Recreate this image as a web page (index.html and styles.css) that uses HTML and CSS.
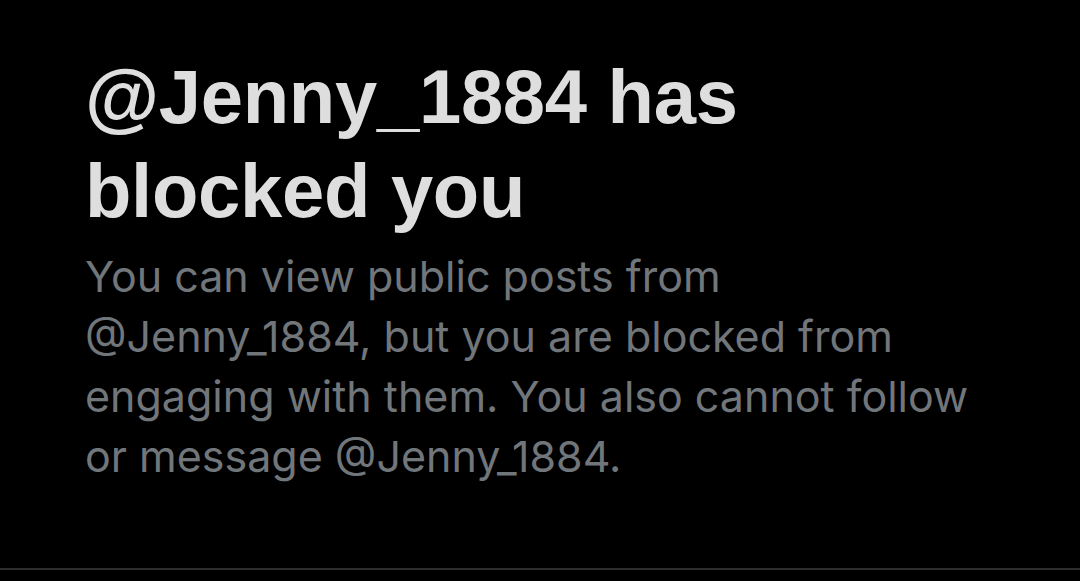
FILE: index.html
```html
<!DOCTYPE html>
<html>
<head>
<meta charset="utf-8">
<link rel="stylesheet" href="styles.css">
</head>
<body>
<main class="page">
  <section class="blocked">
    <h1 class="blocked-title">@Jenny_1884 has blocked you</h1>
    <p class="blocked-text">You can view public posts from @Jenny_1884, but you are blocked from engaging with them. You also cannot follow or message @Jenny_1884.</p>
  </section>
  <div class="divider"></div>
</main>
</body>
</html>
```
FILE: styles.css
```css
html, body {
  margin: 0;
  padding: 0;
  background: #000;
}
.page {
  width: 1080px;
  height: 581px;
  display: flex;
  flex-direction: column;
  background: #000;
}
.blocked {
  flex: 1;
  padding: 50px 0 0 85px;
  display: flex;
  flex-direction: column;
  gap: 8px;
}
.blocked-title {
  margin: 0;
  width: 700px;
  font-family: "Liberation Sans", Arial, sans-serif;
  font-weight: 700;
  font-size: 76px;
  line-height: 94px;
  letter-spacing: -0.3px;
  color: #dedede;
}
.blocked-text {
  margin: 0;
  width: 910px;
  font-family: Inter, "Noto Sans", sans-serif;
  font-weight: 400;
  font-size: 43px;
  line-height: 60px;
  color: #71767b;
}
.divider {
  height: 2px;
  background: #2a2c2e;
  margin-bottom: 11px;
}
```
